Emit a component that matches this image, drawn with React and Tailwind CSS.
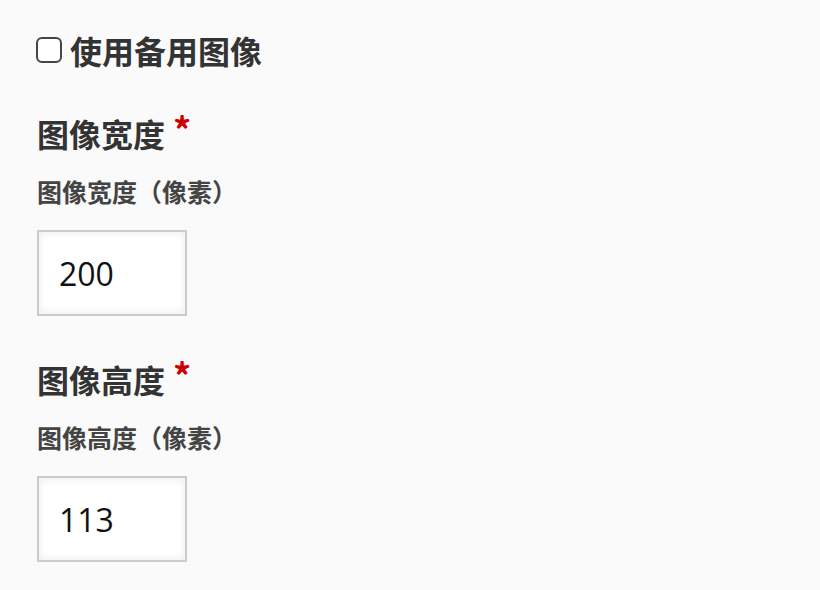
import { useState } from 'react';

function Field({ label, hint, value, onChange }) {
  return (
    <div className="flex flex-col">
      <h3 className="flex items-start text-[32px] font-bold leading-[40px] text-[#333]">
        {label}
        <span className="ml-[8px] mt-[-5px] text-[36px] font-bold leading-[40px] text-[#cc0000]">*</span>
      </h3>
      <p className="mt-[22px] text-[25px] font-bold leading-[32px] text-[#444]">{hint}</p>
      <input
        type="text"
        value={value}
        onChange={(e) => onChange(e.target.value)}
        className="mt-[23px] h-[86px] w-[150px] border-2 border-[#cccccc] bg-white px-[20px] text-[32px] text-[#111] shadow-[inset_0_0_8px_rgba(0,0,0,0.09)] outline-none"
        style={{ fontFamily: '"Open Sans", "Noto Sans", sans-serif' }}
      />
    </div>
  );
}

export default function App() {
  const [fallback, setFallback] = useState(false);
  const [width, setWidth] = useState('200');
  const [height, setHeight] = useState('113');

  return (
    <div
      className="min-h-[590px] bg-[#fafafa] pl-[36px] pt-[30px]"
      style={{ fontFamily: '"Noto Sans CJK SC", "Noto Sans", sans-serif' }}
    >
      <label className="flex h-[40px] items-center gap-[8px]">
        <input
          type="checkbox"
          checked={fallback}
          onChange={(e) => setFallback(e.target.checked)}
          className="h-[26px] w-[26px] appearance-none rounded-[6px] border-[2.5px] border-[#444] bg-white checked:bg-[#444]"
        />
        <span className="text-[32px] font-bold leading-[40px] text-[#333]">使用备用图像</span>
      </label>

      <div className="mt-[43px] flex flex-col gap-[43px] pl-[1px]">
        <Field label="图像宽度" hint="图像宽度（像素）" value={width} onChange={setWidth} />
        <Field label="图像高度" hint="图像高度（像素）" value={height} onChange={setHeight} />
      </div>
    </div>
  );
}
